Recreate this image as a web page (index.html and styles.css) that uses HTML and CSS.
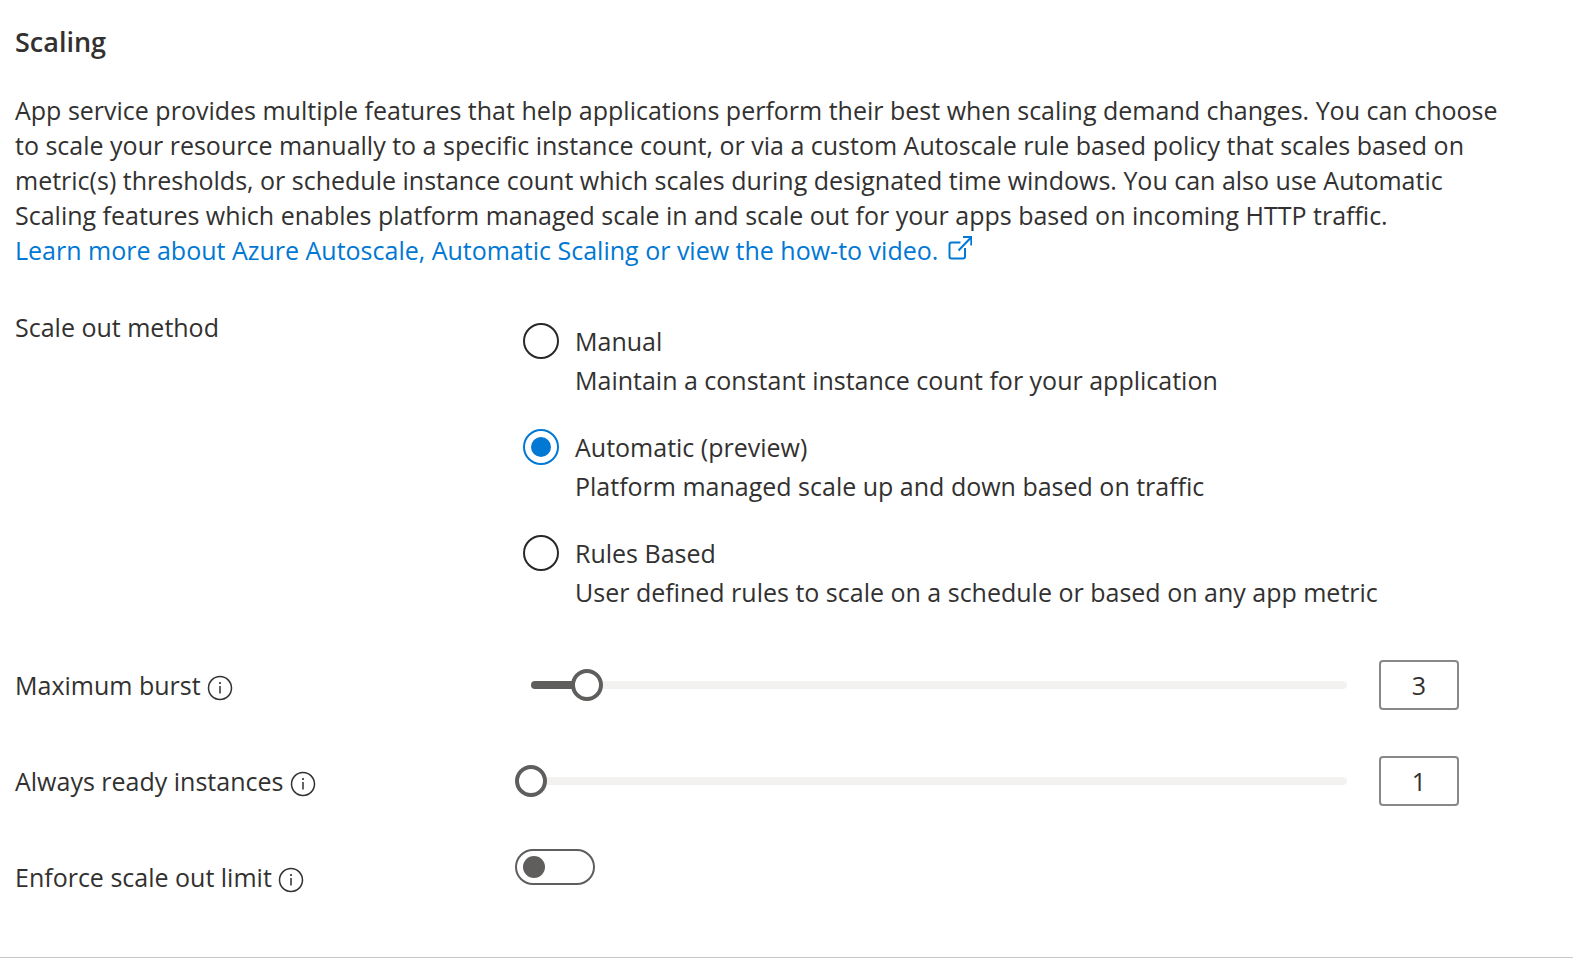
FILE: index.html
```html
<!DOCTYPE html>
<html lang="en">
<head>
<meta charset="utf-8">
<title>Scaling</title>
<link rel="stylesheet" href="styles.css">
</head>
<body>
<main class="panel">
  <h1 class="title">Scaling</h1>
  <p class="intro">App service provides multiple features that help applications perform their best when scaling demand changes. You can choose<br>
    to scale your resource manually to a specific instance count, or via a custom Autoscale rule based policy that scales based on<br>
    metric(s) thresholds, or schedule instance count which scales during designated time windows. You can also use Automatic<br>
    Scaling features which enables platform managed scale in and scale out for your apps based on incoming HTTP traffic.<br>
    <a class="learn" href="#">Learn more about Azure Autoscale, Automatic Scaling or view the how-to video.<svg class="external" viewBox="0 0 24 24" aria-hidden="true"><path d="M12.500 6.500H3.500a2 2 0 0 0-2 2v12A2 2 0 0 0 3.500 22.500H15a2 2 0 0 0 2-2V12M10.500 14.500 23 1.500M15 1h8.300v8.500"/></svg></a>
  </p>

  <div class="row methods" role="radiogroup" aria-labelledby="method-label">
    <div class="label" id="method-label">Scale out method</div>
    <div class="options">
      <label class="option">
        <input class="radio" type="radio" name="method">
        <span class="option-name">Manual</span>
        <span class="option-note">Maintain a constant instance count for your application</span>
      </label>
      <label class="option">
        <input class="radio" type="radio" name="method" checked>
        <span class="option-name">Automatic (preview)</span>
        <span class="option-note">Platform managed scale up and down based on traffic</span>
      </label>
      <label class="option">
        <input class="radio" type="radio" name="method">
        <span class="option-name">Rules Based</span>
        <span class="option-note">User defined rules to scale on a schedule or based on any app metric</span>
      </label>
    </div>
  </div>

  <div class="row setting">
    <label class="label" for="burst">Maximum burst <svg class="info" viewBox="0 0 26 26" aria-hidden="true"><circle cx="13" cy="13" r="11.500"/><path d="M13 11v7.500"/><circle class="dot" cx="13" cy="8" r="1.100"/></svg></label>
    <div class="control">
      <div class="slider">
        <div class="rail"><div class="fill" style="width:6.900%"></div></div>
        <input class="range" id="burst" type="range" min="1" max="30" value="3">
      </div>
      <input class="count" type="text" value="3" aria-label="Maximum burst value">
    </div>
  </div>

  <div class="row setting">
    <label class="label" for="ready">Always ready instances <svg class="info" viewBox="0 0 26 26" aria-hidden="true"><circle cx="13" cy="13" r="11.500"/><path d="M13 11v7.500"/><circle class="dot" cx="13" cy="8" r="1.100"/></svg></label>
    <div class="control">
      <div class="slider">
        <div class="rail"></div>
        <input class="range" id="ready" type="range" min="1" max="30" value="1">
      </div>
      <input class="count" type="text" value="1" aria-label="Always ready instances value">
    </div>
  </div>

  <div class="row setting switch-row">
    <label class="label" for="limit">Enforce scale out limit <svg class="info" viewBox="0 0 26 26" aria-hidden="true"><circle cx="13" cy="13" r="11.500"/><path d="M13 11v7.500"/><circle class="dot" cx="13" cy="8" r="1.100"/></svg></label>
    <input class="toggle" id="limit" type="checkbox" role="switch">
  </div>
</main>
</body>
</html>
```
FILE: styles.css
```css
* {
  box-sizing: border-box;
}

body {
  margin: 0;
  background: #fff;
  color: #323130;
  font-family: "Segoe UI", "Open Sans", "Noto Sans", sans-serif;
  font-size: 25px;
  line-height: 35px;
}

input {
  margin: 0;
  font: inherit;
  color: inherit;
}

.panel {
  padding: 24px 15px 58px;
  border-bottom: 1px solid #c8c8c8;
}

.title {
  margin: 0;
  font-size: 27px;
  font-weight: 600;
  line-height: 35px;
}

.intro {
  margin: 34px 0 0;
  white-space: nowrap;
}

.learn {
  color: #0078d4;
  text-decoration: none;
}

.external {
  width: 24px;
  height: 24px;
  margin-left: 10px;
  fill: none;
  stroke: currentColor;
  stroke-width: 2;
}

.row {
  display: grid;
  grid-template-columns: 500px 1fr;
  padding-right: 99px;
}

.methods {
  margin-top: 42px;
}

.options {
  display: grid;
  gap: 31px;
  padding: 13px 0 4px 8px;
}

.option {
  display: grid;
  grid-template-columns: 36px 1fr;
  column-gap: 16px;
  row-gap: 3px;
  white-space: nowrap;
}

.option-name {
  line-height: 37px;
}

.option-note {
  grid-column: 2;
}

.radio {
  display: grid;
  place-items: center;
  width: 36px;
  height: 36px;
  appearance: none;
  border: 2px solid #292827;
  border-radius: 50%;
}

.radio:checked {
  border-color: #0078d4;
}

.radio:checked::before {
  width: 20px;
  height: 20px;
  border-radius: 50%;
  background: #0078d4;
  content: "";
}

.setting {
  min-height: 50px;
  margin-top: 46px;
  align-items: start;
}

.setting .label {
  padding-top: 8px;
}

.switch-row {
  margin-top: 43px;
}

.switch-row .label {
  padding-top: 11px;
}

.info {
  width: 26px;
  height: 26px;
  vertical-align: -6px;
  fill: none;
  stroke: currentColor;
  stroke-width: 1.500;
}

.info .dot {
  fill: currentColor;
  stroke: none;
}

.control {
  display: flex;
  gap: 16px;
}

.slider {
  display: grid;
  flex: 1;
  align-items: center;
}

.rail,
.range {
  grid-area: 1 / 1;
}

.rail {
  height: 8px;
  margin: 0 16px;
  overflow: hidden;
  border-radius: 4px;
  background: #f3f2f1;
}

.fill {
  height: 100%;
  background: #605e5c;
}

.range {
  width: 100%;
  height: 32px;
  appearance: none;
  background: transparent;
}

.range::-webkit-slider-thumb {
  width: 32px;
  height: 32px;
  appearance: none;
  border: 4px solid #605e5c;
  border-radius: 50%;
  background: #fff;
}

.count {
  width: 80px;
  height: 50px;
  padding: 0;
  border: 2px solid #8a8886;
  border-radius: 4px;
  text-align: center;
}

.toggle {
  display: flex;
  align-items: center;
  width: 80px;
  height: 36px;
  padding: 0 6px;
  appearance: none;
  border: 2px solid #605e5c;
  border-radius: 18px;
}

.toggle::before {
  width: 22px;
  height: 22px;
  border-radius: 50%;
  background: #605e5c;
  content: "";
}
```
